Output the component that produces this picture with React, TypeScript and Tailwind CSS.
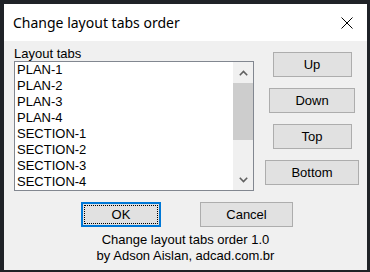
import React from "react";

const items = ["PLAN-1", "PLAN-2", "PLAN-3", "PLAN-4", "SECTION-1", "SECTION-2", "SECTION-3", "SECTION-4"];

function SideButton({ label, width }: { label: string; width: string }) {
  return (
    <button className={`${width} h-[25px] bg-[#e1e1e1] border border-[#adadad] text-[13px] leading-none text-black`}>
      {label}
    </button>
  );
}

export default function App() {
  return (
    <div className="w-[370px] h-[272px] bg-[#1f2227] pt-[4px] pl-[4px] font-['Liberation_Sans',Arial,sans-serif]">
      <div className="w-[363px] h-[266px] flex flex-col bg-[#f0f0f0]">
        {/* Title bar */}
        <div className="h-[37px] bg-white flex items-center justify-between pl-[9px] pr-[14px]">
          <span className="font-['Noto_Sans',sans-serif] text-[14px] leading-none text-black">Change layout tabs order</span>
          <svg width="12" height="12" viewBox="0 0 12 12" className="shrink-0">
            <path d="M0.5 0.5 L11.5 11.5 M11.5 0.5 L0.5 11.5" stroke="#000" strokeWidth="1" fill="none" />
          </svg>
        </div>

        {/* Body */}
        <div className="flex">
          <div className="ml-[10px] w-[240px] pt-[5px]">
            <div className="text-[13px] leading-[15px] text-black">Layout tabs</div>
            <div className="h-[130px] border border-[#828790] bg-white flex">
              <ul className="flex-1 pl-[2px] text-[13px] leading-[16px] text-black">
                {items.map((t) => (
                  <li key={t}>{t}</li>
                ))}
              </ul>
              <div className="w-[20px] bg-[#f0f0f0] flex flex-col">
                <div className="h-[21px] flex items-center justify-center">
                  <svg width="9" height="6" viewBox="0 0 9 6">
                    <path d="M0.8 5.2 L4.5 1.5 L8.2 5.2" stroke="#606060" strokeWidth="1.6" fill="none" />
                  </svg>
                </div>
                <div className="h-[57px] bg-[#cdcdcd]" />
                <div className="flex-1" />
                <div className="h-[20px] flex items-center justify-center">
                  <svg width="9" height="6" viewBox="0 0 9 6">
                    <path d="M0.8 0.8 L4.5 4.5 L8.2 0.8" stroke="#606060" strokeWidth="1.6" fill="none" />
                  </svg>
                </div>
              </div>
            </div>
          </div>
          <div className="ml-[3px] w-[110px] pt-[11px] flex flex-col items-center gap-[11px]">
            <SideButton label="Up" width="w-[79px]" />
            <SideButton label="Down" width="w-[86px]" />
            <SideButton label="Top" width="w-[79px]" />
            <SideButton label="Bottom" width="w-[94px]" />
          </div>
        </div>

        {/* Bottom buttons */}
        <div className="flex pl-[77px] gap-[39px] mt-[11px]">
          <button className="w-[80px] h-[25px] border-2 border-[#0078d7] bg-[#e1e1e1] p-[1px]">
            <div className="w-full h-full border border-dotted border-black flex items-center justify-center text-[13px] text-black">
              OK
            </div>
          </button>
          <button className="w-[93px] h-[25px] bg-[#e1e1e1] border border-[#adadad] text-[13px] text-black">
            Cancel
          </button>
        </div>

        {/* Footer */}
        <div className="mt-[5px] text-center text-[13px] leading-[16px] text-black">
          <div>Change layout tabs order 1.0</div>
          <div>by Adson Aislan, adcad.com.br</div>
        </div>
      </div>
    </div>
  );
}
